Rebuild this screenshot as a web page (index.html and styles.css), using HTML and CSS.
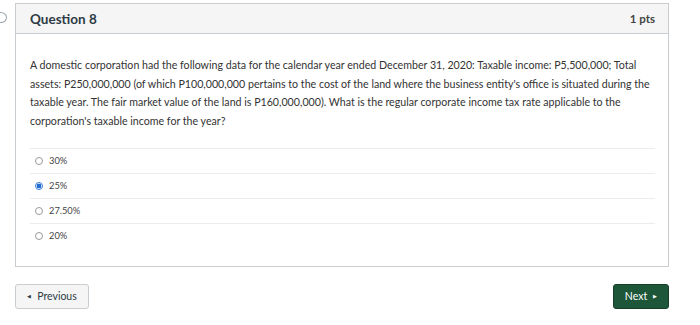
FILE: index.html
```html
<!DOCTYPE html>
<html lang="en">
<head>
    <meta charset="UTF-8">
    <title>Question 8</title>
    <link rel="stylesheet" href="styles.css">
</head>
<body>
    <div class="page">
        <span class="flag"></span>

        <!-- Question Card -->
        <div class="question">
            <div class="question-header">
                <span class="question-title">Question 8</span>
                <span class="question-points">1 pts</span>
            </div>
            <div class="question-body">
                <p class="question-text">A domestic corporation had the following data for the calendar year ended December 31, 2020: Taxable income: P5,500,000; Total assets: P250,000,000 (of which P100,000,000 pertains to the cost of the land where the business entity's office is situated during the taxable year. The fair market value of the land is P160,000,000). What is the regular corporate income tax rate applicable to the corporation's taxable income for the year?</p>

                <ul class="answers">
                    <li class="answer"><span class="radio"></span>30%</li>
                    <li class="answer"><span class="radio checked"></span>25%</li>
                    <li class="answer"><span class="radio"></span>27.50%</li>
                    <li class="answer"><span class="radio"></span>20%</li>
                </ul>
            </div>
        </div>

        <!-- Navigation -->
        <div class="nav">
            <button class="btn btn-prev"><span class="arrow">&#9664;</span>Previous</button>
            <button class="btn btn-next">Next<span class="arrow">&#9654;</span></button>
        </div>
    </div>
</body>
</html>
```

FILE: styles.css
```css
/* Global Styles */
body {
    font-family: Lato, "Open Sans", sans-serif;
    margin: 0;
    background-color: #fff;
    color: #2d3b45;
}

.page {
    position: relative;
    width: 654px;
    padding: 3px 0 0 15px;
}

/* Bookmark circle at the left edge */
.flag {
    position: absolute;
    left: -6px;
    top: 12px;
    width: 11px;
    height: 9px;
    border: 1px solid #9aa3a8;
    border-radius: 50%;
}

/* Question Card */
.question {
    border: 1px solid #c7cdd1;
    background-color: #fff;
}

.question-header {
    display: flex;
    justify-content: space-between;
    align-items: center;
    height: 29px;
    padding: 0 13px 0 14px;
    background-color: #f5f5f5;
    border-bottom: 1px solid #c7cdd1;
}

.question-title {
    font-size: 13.5px;
    font-weight: 700;
    color: #2d3b45;
}

.question-points {
    font-size: 11.5px;
    font-weight: 700;
    color: #444;
}

.question-body {
    padding: 22px 13px 18px 14px;
}

.question-text {
    margin: 0 0 17px;
    font-size: 10.65px;
    line-height: 18.7px;
    color: #333;
}

/* Answers */
.answers {
    list-style: none;
    margin: 0;
    padding: 0;
}

.answer {
    display: flex;
    align-items: center;
    height: 24px;
    padding-left: 5px;
    border-top: 1px solid #ececec;
    font-size: 9.3px;
    color: #444;
}

.radio {
    width: 8px;
    height: 8px;
    margin-right: 6px;
    border: 1px solid #9a9a9a;
    border-radius: 50%;
    box-sizing: border-box;
    background-color: #fff;
}

.radio.checked {
    border: 1px solid #3a7bd5;
    background: radial-gradient(circle, #1f6fd1 0 2.3px, #fff 2.6px);
}

/* Navigation */
.nav {
    display: flex;
    justify-content: space-between;
    margin-top: 17px;
}

.btn {
    height: 25px;
    border-radius: 3px;
    font-family: Lato, sans-serif;
    font-size: 10.5px;
    cursor: pointer;
}

.btn .arrow {
    font-size: 5px;
    vertical-align: 2px;
}

.btn-prev {
    width: 74px;
    background-color: #f5f5f5;
    border: 1px solid #c7cdd1;
    color: #2d3b45;
}

.btn-prev .arrow {
    margin-right: 6px;
}

.btn-next {
    width: 56px;
    background-color: #1d5638;
    border: 1px solid #163f2a;
    color: #fff;
}

.btn-next .arrow {
    margin-left: 6px;
}
```
